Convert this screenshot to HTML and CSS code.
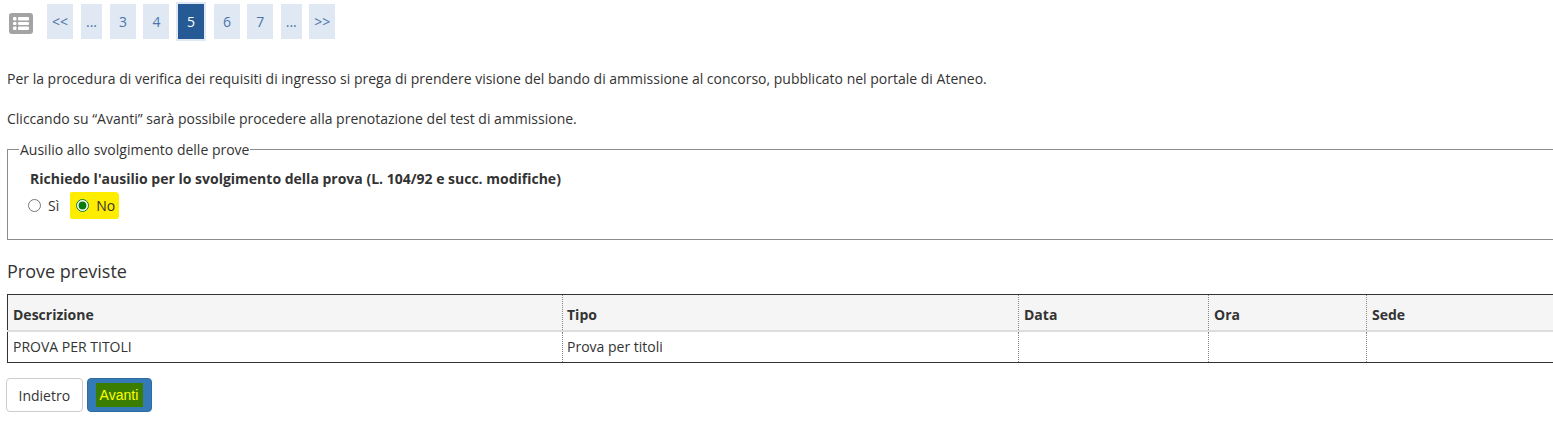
FILE: index.html
```html
<!DOCTYPE html>
<html lang="it">
<head>
  <meta charset="UTF-8">
  <title>Prove previste</title>
  <link rel="stylesheet" href="styles.css">
</head>
<body>
  <div class="nav-bar">
    <span class="list-icon">
      <svg width="24" height="21" viewBox="0 0 24 21">
        <rect width="24" height="21" rx="3" fill="#a3a3a3"/>
        <g fill="#fff">
          <rect x="4" y="4" width="3.5" height="3.5" rx="1"/>
          <rect x="9" y="4" width="11" height="3.5" rx="1"/>
          <rect x="4" y="9" width="3.5" height="3" rx="1"/>
          <rect x="9" y="9" width="11" height="3" rx="1"/>
          <rect x="4" y="13.5" width="3.5" height="3.5" rx="1"/>
          <rect x="9" y="13.5" width="11" height="3.5" rx="1"/>
        </g>
      </svg>
    </span>
    <ul class="pager">
      <li>&lt;&lt;</li>
      <li class="dots">...</li>
      <li>3</li>
      <li>4</li>
      <li class="active">5</li>
      <li>6</li>
      <li>7</li>
      <li class="dots">...</li>
      <li>&gt;&gt;</li>
    </ul>
  </div>

  <div class="intro">
    <p>Per la procedura di verifica dei requisiti di ingresso si prega di prendere visione del bando di ammissione al concorso, pubblicato nel portale di Ateneo.</p>
    <p>Cliccando su “Avanti” sarà possibile procedere alla prenotazione del test di ammissione.</p>
  </div>

  <fieldset class="aid-box">
    <legend>Ausilio allo svolgimento delle prove</legend>
    <div class="aid-title">Richiedo l'ausilio per lo svolgimento della prova (L. 104/92 e succ. modifiche)</div>
    <div class="aid-options">
      <label class="opt"><input type="radio" name="aid"> Sì</label>
      <label class="opt opt-marked"><input type="radio" name="aid" checked> No</label>
    </div>
  </fieldset>

  <h2 class="section-title">Prove previste</h2>

  <table class="exams">
    <thead>
      <tr>
        <th class="col-desc">Descrizione</th>
        <th class="col-type">Tipo</th>
        <th class="col-date">Data</th>
        <th class="col-time">Ora</th>
        <th>Sede</th>
      </tr>
    </thead>
    <tbody>
      <tr>
        <td>PROVA PER TITOLI</td>
        <td>Prova per titoli</td>
        <td></td>
        <td></td>
        <td></td>
      </tr>
    </tbody>
  </table>

  <div class="actions">
    <button class="btn">Indietro</button>
    <button class="btn btn-primary"><span class="marked">Avanti</span></button>
  </div>
</body>
</html>
```

FILE: styles.css
```css
html, body {
  overflow: hidden;
}
body {
  margin: 0;
  height: 422px;
  font-family: "Open Sans", sans-serif;
  font-size: 14px;
  color: #333;
  background-color: #fff;
}
.nav-bar {
  display: flex;
  padding: 4px 0 0 9px;
}
.list-icon {
  margin: 9px 14px 0 0;
  height: 21px;
}
.pager {
  display: flex;
  list-style: none;
  margin: 0;
  padding: 0;
}
.pager li {
  width: 26px;
  height: 35px;
  line-height: 35px;
  margin-right: 7.4px;
  text-align: center;
  background-color: #dfe8f3;
  color: #4a76a8;
  font-size: 14px;
}
.pager li:nth-child(-n+2) {
  margin-right: 8px;
}
.pager .dots {
  width: 21px;
}
.pager .active {
  background-color: #265a94;
  color: #fff;
  outline: 2px solid #dfe8f3;
  margin: 0 10px 0 1.2px;
}
.intro {
  padding: 0 7px;
  margin-top: 30px;
}
.intro p {
  margin: 0 0 21px;
  line-height: 19px;
}
.aid-box {
  margin: -9px 0 0 7px;
  padding: 11px 0 0 22px;
  width: 1600px;
  height: 87px;
  border: 1px solid #8c8c8c;
}
.aid-box legend {
  padding: 0 1px;
  margin-left: -11px;
  font-size: 14px;
}
.aid-title {
  font-weight: bold;
  line-height: 18px;
}
.aid-options {
  display: flex;
  margin: 4px 0 0 -2px;
}
.opt {
  display: flex;
  align-items: center;
  height: 27px;
}
.opt input {
  margin: 0 7px 0 0;
  width: 13px;
  height: 13px;
  accent-color: #0a7a0a;
}
.opt-marked {
  margin-left: 11px;
  padding: 0 4px 0 6px;
  background-color: #ffed00;
  border-radius: 2px 4px 3px 2px;
}
.section-title {
  margin: 19px 0 11px 7px;
  font-size: 18px;
  font-weight: normal;
  line-height: 24px;
}
.exams {
  margin-left: 7px;
  width: 1600px;
  table-layout: fixed;
  border-collapse: collapse;
  border-top: 1px solid #333;
  border-bottom: 1px solid #333;
  border-left: 1px solid #333;
}
.exams th, .exams td {
  box-sizing: border-box;
  padding: 0 5px;
  text-align: left;
  border-left: 1px dotted #888;
}
.exams th {
  height: 36px;
  padding-top: 4px;
  background-color: #f5f5f5;
  border-bottom: 2px solid #ddd;
  font-size: 14px;
}
.exams td {
  height: 32px;
}
.exams th:nth-child(2), .exams td:nth-child(2) {
  padding-left: 4px;
}
.col-desc { width: 555px; }
.col-type { width: 456px; }
.col-date { width: 190px; }
.col-time { width: 158px; }
.actions {
  display: flex;
  gap: 4px;
  margin: 15px 0 0 6px;
}
.btn {
  height: 34px;
  padding: 0 11.5px;
  font-family: "Open Sans", sans-serif;
  font-size: 14px;
  color: #333;
  background-color: #fff;
  border: 1px solid #ccc;
  border-radius: 4px;
}
.btn-primary {
  padding: 0 8px;
  background-color: #337ab7;
  border-color: #2e6da4;
}
.marked {
  display: block;
  padding: 3px 5px 3px 4px;
  line-height: 18px;
  font-family: "Liberation Sans", sans-serif;
  color: #ffff00;
  background-color: #3a7d00;
}
```
